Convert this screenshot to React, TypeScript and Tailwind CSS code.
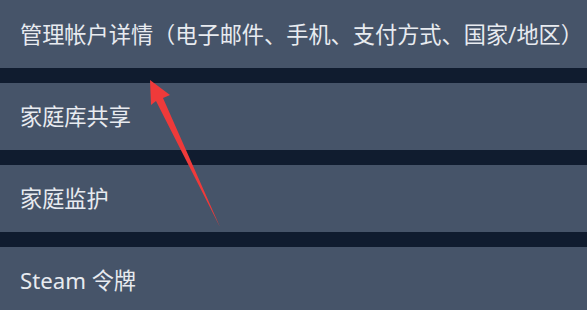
import React from "react";

const rows = [
  "管理帐户详情（电子邮件、手机、支付方式、国家/地区）",
  "家庭库共享",
  "家庭监护",
  "Steam 令牌",
];

export default function App() {
  return (
    <div
      className="relative w-[587px] h-[310px] overflow-hidden bg-[#101c2f]"
      style={{ fontFamily: '"Noto Sans", "Noto Sans CJK SC", sans-serif' }}
    >
      <div className="flex flex-col gap-[15px]">
        {rows.map((t, i) => (
          <div
            key={i}
            className={`flex items-center bg-[#465469] pl-[20px] text-[22.2px] text-[#e8ebf0] whitespace-nowrap ${
              i === 0 ? "h-[68px] pt-px" : "h-[67px]"
            }`}
          >
            {t}
          </div>
        ))}
      </div>
      <svg
        className="absolute left-0 top-0"
        width="587"
        height="310"
        viewBox="0 0 587 310"
      >
        <polygon
          points="150,80 170,95 163,98 220,227 156,101 151,105"
          fill="#ef3a3a"
        />
      </svg>
    </div>
  );
}
